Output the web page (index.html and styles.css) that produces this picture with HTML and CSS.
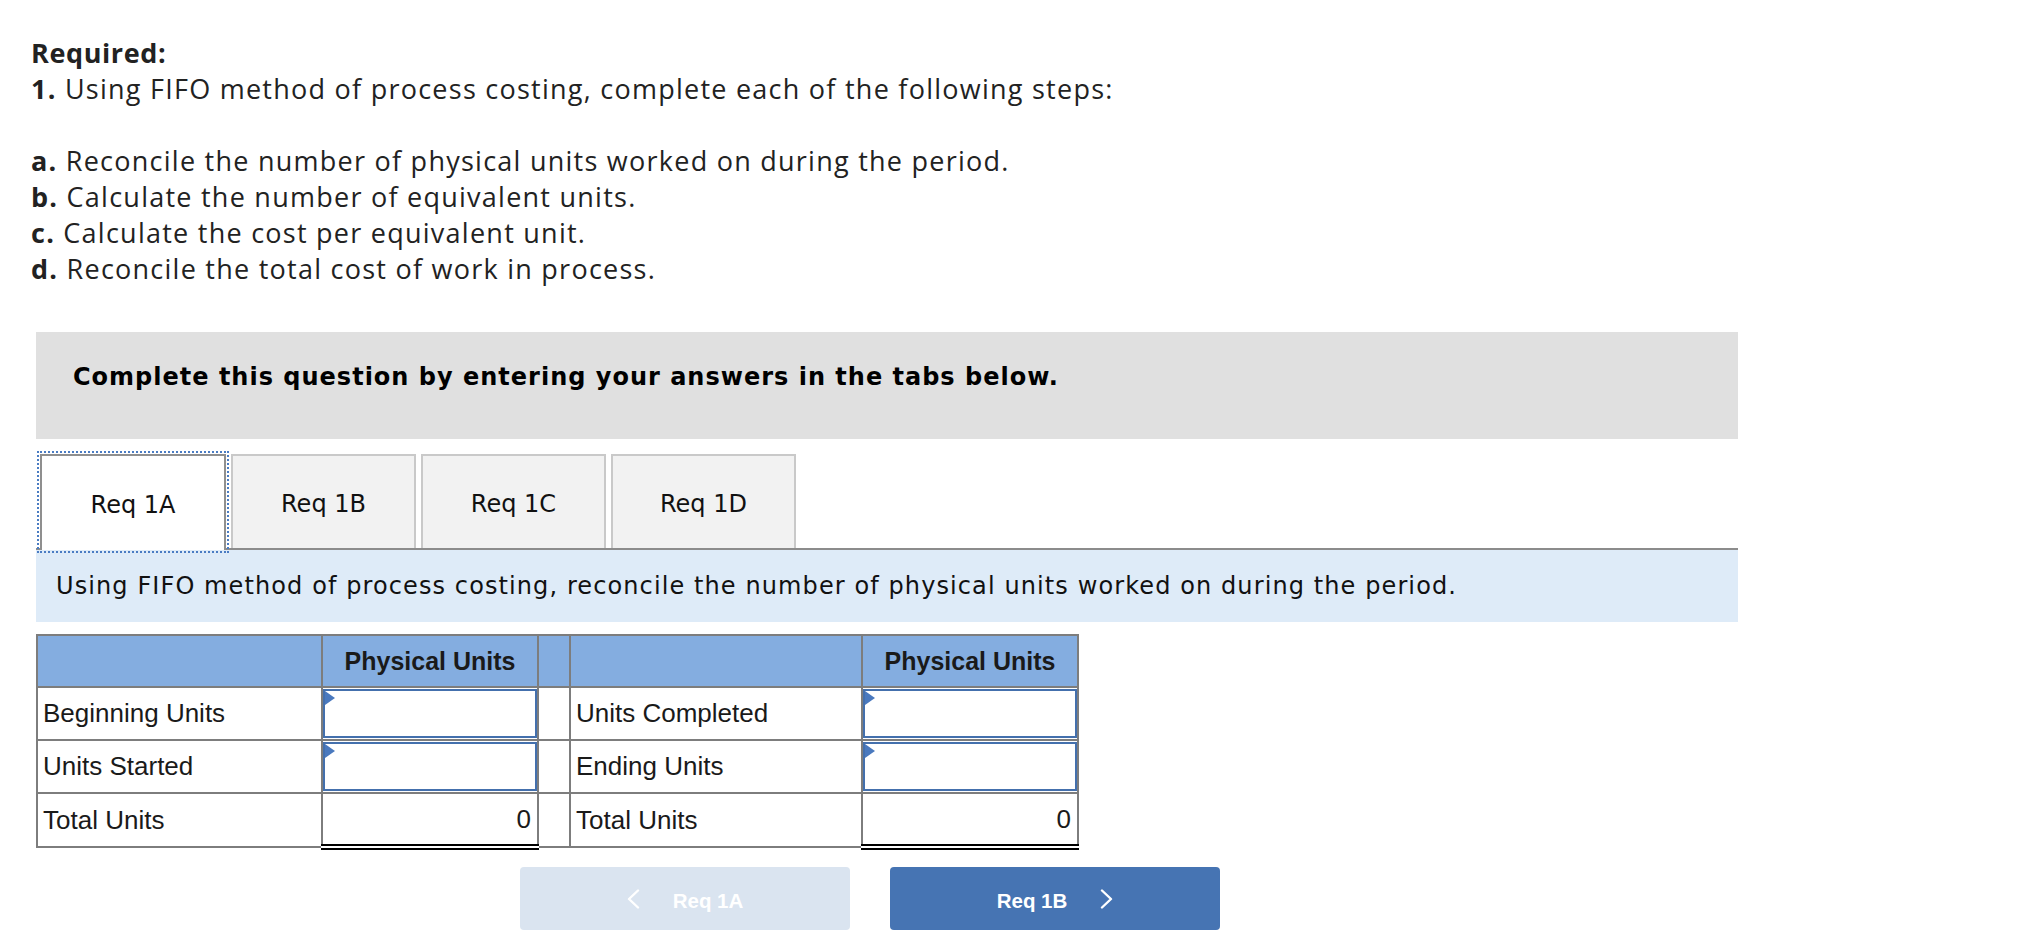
FILE: index.html
```html
<!DOCTYPE html>
<html lang="en">
<head>
<meta charset="utf-8">
<title>Required</title>
<link rel="stylesheet" href="styles.css">
</head>
<body>
<div class="page">
  <div class="req">
    <p class="req-line req-title">Required:</p>
    <p class="req-line"><b>1.</b> Using FIFO method of process costing, complete each of the following steps:</p>
    <p class="req-line req-blank">&nbsp;</p>
    <p class="req-line"><b>a.</b> Reconcile the number of physical units worked on during the period.</p>
    <p class="req-line"><b>b.</b> Calculate the number of equivalent units.</p>
    <p class="req-line"><b>c.</b> Calculate the cost per equivalent unit.</p>
    <p class="req-line"><b>d.</b> Reconcile the total cost of work in process.</p>
  </div>

  <div class="question">
    <div class="notice">Complete this question by entering your answers in the tabs below.</div>

    <div class="tabs">
      <div class="tab tab-active">Req 1A</div>
      <div class="tab">Req 1B</div>
      <div class="tab">Req 1C</div>
      <div class="tab">Req 1D</div>
    </div>

    <div class="instruction">Using FIFO method of process costing, reconcile the number of physical units worked on during the period.</div>

    <table class="units">
      <colgroup>
        <col class="c-label">
        <col class="c-val">
        <col class="c-gap">
        <col class="c-label2">
        <col class="c-val">
      </colgroup>
      <thead>
        <tr>
          <th></th>
          <th>Physical Units</th>
          <th></th>
          <th></th>
          <th>Physical Units</th>
        </tr>
      </thead>
      <tbody>
        <tr>
          <td class="lbl">Beginning Units</td>
          <td class="inp"><div class="field"></div></td>
          <td></td>
          <td class="lbl">Units Completed</td>
          <td class="inp"><div class="field"></div></td>
        </tr>
        <tr>
          <td class="lbl">Units Started</td>
          <td class="inp"><div class="field"></div></td>
          <td></td>
          <td class="lbl">Ending Units</td>
          <td class="inp"><div class="field"></div></td>
        </tr>
        <tr class="total-row">
          <td class="lbl">Total Units</td>
          <td class="total">0</td>
          <td></td>
          <td class="lbl">Total Units</td>
          <td class="total">0</td>
        </tr>
      </tbody>
    </table>

    <div class="nav">
      <div class="btn btn-prev">
        <svg class="chev" width="13" height="20" viewBox="0 0 13 20"><polyline points="11,1.5 2,10 11,18.5" fill="none" stroke="#ffffff" stroke-width="2.4" stroke-linecap="round" stroke-linejoin="round"/></svg>
        <span>Req 1A</span>
      </div>
      <div class="btn btn-next">
        <span>Req 1B</span>
        <svg class="chev" width="13" height="20" viewBox="0 0 13 20"><polyline points="2,1.5 11,10 2,18.5" fill="none" stroke="#ffffff" stroke-width="2.4" stroke-linecap="round" stroke-linejoin="round"/></svg>
      </div>
    </div>
  </div>
</div>
</body>
</html>
```

FILE: styles.css
```css
html, body {
  margin: 0;
  padding: 0;
  background: #ffffff;
}

.page {
  width: 2044px;
}

.req {
  padding: 35px 0 0 31px;
  font-family: "Open Sans", "Liberation Sans", sans-serif;
  font-size: 27px;
  letter-spacing: 1.25px;
  color: #222222;
}

.req-line {
  margin: 0;
  line-height: 36px;
  height: 36px;
  white-space: nowrap;
}

.req-title {
  font-weight: 700;
  letter-spacing: 0.6px;
}

.req-line b {
  font-weight: 700;
}

.question {
  margin: 45px 0 0 36px;
  width: 1702px;
}

.notice {
  box-sizing: border-box;
  height: 107px;
  padding: 30px 0 0 37px;
  background: #e0e0e0;
  font-family: "DejaVu Sans", Verdana, sans-serif;
  font-weight: 700;
  font-size: 24px;
  letter-spacing: 1px;
  line-height: 30px;
  color: #000000;
}

.tabs {
  display: flex;
  align-items: flex-end;
  gap: 5px;
  margin-top: 15px;
  padding-left: 4px;
  border-bottom: 2px solid #8c8c8c;
}

.tab {
  box-sizing: border-box;
  width: 185px;
  height: 94px;
  display: flex;
  align-items: center;
  justify-content: center;
  padding-top: 4px;
  background: #f2f2f2;
  border: 2px solid #c9c9c9;
  border-bottom: none;
  font-family: "DejaVu Sans", Verdana, sans-serif;
  font-size: 24px;
  color: #111111;
}

.tab-active {
  position: relative;
  z-index: 1;
  width: 186px;
  height: 96px;
  margin-bottom: -2px;
  background: #ffffff;
  border-color: #8f8f8f;
  outline: 2px dotted #4a7cc3;
  outline-offset: 1px;
}

.instruction {
  box-sizing: border-box;
  height: 72px;
  padding: 21px 0 0 20px;
  background: #deebf8;
  font-family: "DejaVu Sans", Verdana, sans-serif;
  font-size: 24px;
  letter-spacing: 1.1px;
  line-height: 30px;
  color: #111111;
}

.units {
  margin-top: 12px;
  border-collapse: collapse;
  table-layout: fixed;
  width: 1043px;
  font-family: "Liberation Sans", Arial, sans-serif;
  font-size: 26px;
  color: #1a1a1a;
}

.c-label { width: 285px; }
.c-val { width: 216px; }
.c-gap { width: 32px; }
.c-label2 { width: 292px; }

.units th,
.units td {
  border: 2px solid #7d7d7d;
  padding: 0;
}

.units th {
  height: 50px;
  background: #84ade0;
  font-weight: 700;
  font-size: 25px;
  text-align: center;
  color: #1a1a1a;
}

.units td {
  height: 50px;
  background: #ffffff;
}

.units td.lbl {
  padding-left: 5px;
  white-space: nowrap;
}

.units td.inp {
  padding: 1px 0 0 0;
  vertical-align: top;
}

.field {
  position: relative;
  box-sizing: border-box;
  height: 49px;
  border: 2px solid #4470ad;
  background: #ffffff;
}

.field::before {
  content: "";
  position: absolute;
  left: 0;
  top: 0;
  border-top: 7px solid transparent;
  border-bottom: 7px solid transparent;
  border-left: 10px solid #4a79be;
}

.total-row td {
  height: 50px;
}

.units td.total {
  text-align: right;
  padding-right: 6px;
  border-top: 2px solid #000000;
  border-bottom: 6px double #000000;
}

.nav {
  display: flex;
  gap: 40px;
  margin: 17px 0 0 484px;
}

.btn {
  box-sizing: border-box;
  width: 330px;
  height: 63px;
  display: flex;
  align-items: center;
  justify-content: center;
  gap: 33px;
  padding-top: 4px;
  border-radius: 4px;
  font-family: "Liberation Sans", Arial, sans-serif;
  font-weight: 700;
  font-size: 20.5px;
  color: #ffffff;
}

.btn-prev {
  background: #dae4f0;
}

.btn-next {
  background: #4674b3;
}

.chev {
  display: block;
  margin-top: -4px;
}
```
